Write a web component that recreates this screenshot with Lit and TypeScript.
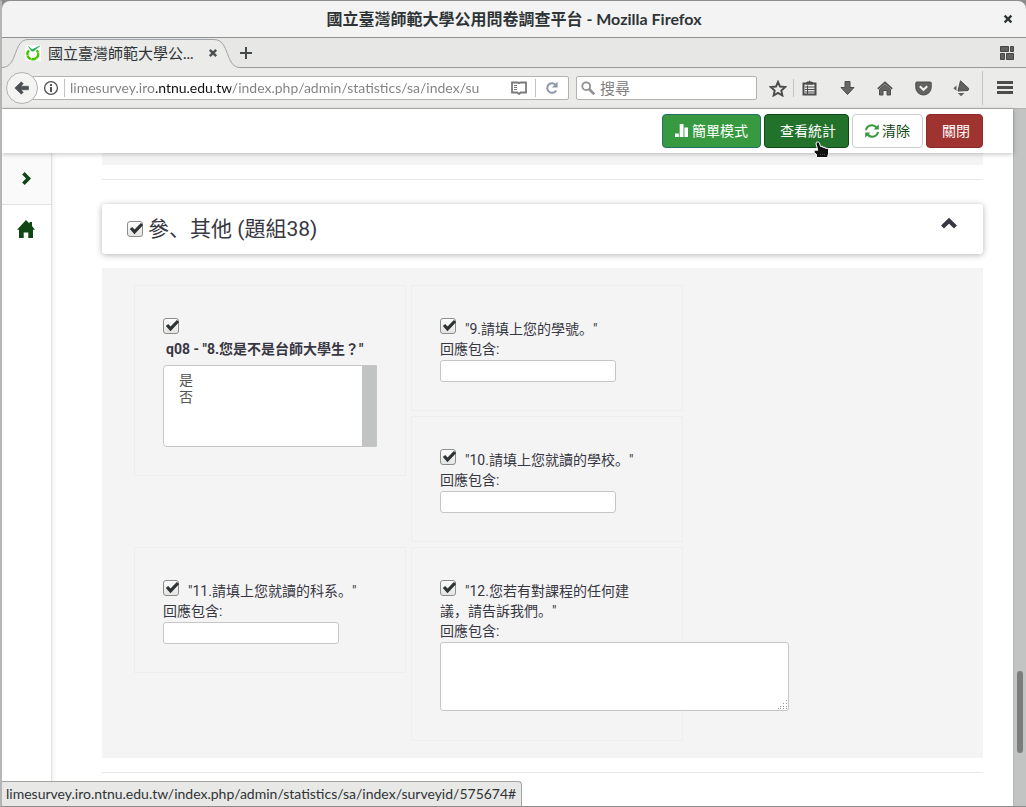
import { LitElement, html, css, svg, TemplateResult } from "lit";
import { customElement, property } from "lit/decorators.js";

const UI = css`Lato, "Noto Sans CJK SC", sans-serif`;
const WEB = css`Roboto, "Noto Sans CJK SC", sans-serif`;

const icon = (w: number, h: number, body: TemplateResult) =>
  html`<svg width=${w} height=${h} viewBox="0 0 ${w} ${h}" aria-hidden="true">${body}</svg>`;

const icons = {
  close: icon(10, 10, svg`<path d="M1.6 1.6l6.8 6.8M8.4 1.6L1.6 8.4" stroke="#2e3436" stroke-width="2.2" fill="none"/>`),
  tabClose: icon(10, 10, svg`<path d="M1.8 1.8l6.4 6.4M8.2 1.8L1.8 8.2" stroke="#4c4f50" stroke-width="2.4" fill="none"/>`),
  plus: icon(12, 12, svg`<path d="M6 0v12M0 6h12" stroke="#45484a" stroke-width="2" fill="none"/>`),
  favicon: icon(16, 16, svg`<rect width="16" height="16" fill="#fff"/><path d="M4 5.400A5.400 5.200 0 1 0 11.600 5.400" stroke="#46c300" stroke-width="2.400" stroke-dasharray="5 .4" fill="none"/><path d="M3.500 1.500l3.600 3.200 7.600-3.700-6.200 5-1.900.1z" fill="#12a84a" stroke="#12a84a" stroke-width=".6"/>`),
  groups: icon(14, 14, svg`<g fill="#616161" stroke="#474747"><path d="M.5.5h8v5h-8zM10.500.5h3v5h-3zM.5 7.500h4v6h-4zM6.500 7.500h7v6h-7z"/></g>`),
  back: icon(16, 14, svg`<path d="M.8 7L7.300.8 9.300 2.800 6.900 5.200H14.500V8.800H6.900L9.300 11.200 7.300 13.200z" fill="#4d5052" stroke="#3f4244" stroke-width=".5"/>`),
  info: icon(16, 16, svg`<circle cx="8" cy="8" r="6.400" fill="none" stroke="#505050" stroke-width="1.300"/><path d="M7 7h2v5H7zM7 4h2v2H7z" fill="#505050"/>`),
  reader: icon(16, 14, svg`<path d="M1 1.500H6.500Q8 1.500 8 3Q8 1.500 9.500 1.500H15V11.500H9.800L8 13 6.200 11.500H1z" fill="none" stroke="#7a7a7a" stroke-width="1.800"/><path d="M3 4.500h3M3 6.500h3M3 8.500h3" stroke="#7a7a7a"/>`),
  reload: icon(14, 14, svg`<path d="M11.200 9.400A4.800 4.800 0 1 1 10.400 3.600" fill="none" stroke="#8b98a8" stroke-width="2"/><path d="M12.600.8V6.600H6.800z" fill="#8b98a8"/>`),
  search: icon(14, 14, svg`<circle cx="5.200" cy="5.200" r="3.900" fill="none" stroke="#8f8f8f" stroke-width="1.800"/><path d="M8 8l5.200 5.200" stroke="#8f8f8f" stroke-width="2.600"/>`),
  star: icon(18, 17, svg`<path d="M9 1.800l2 4.700 5.200.5-3.900 3.500 1.100 5-4.400-2.600-4.400 2.600 1.100-5L1.800 7 7 6.500z" fill="none" stroke="#4c4c4c" stroke-width="1.900"/>`),
  clipboard: icon(15, 16, svg`<path d="M1.500 3.500h12v11h-12z" fill="#e8e8e8" stroke="#4c4c4c" stroke-width="2"/><path d="M4 4L5 2H6.500Q7.500.2 8.500 2H10L11 4z" fill="#4c4c4c" stroke="#4c4c4c"/><path d="M3 7h10M3 9.500h10M3 12h10M5.500 5.500v8.500" stroke="#4c4c4c"/>`),
  download: icon(15, 16, svg`<path d="M5 1.500h5v6h4L7.500 14.500 1 7.500h4z" fill="#666" stroke="#4c4c4c"/>`),
  home: icon(16, 15, svg`<path d="M.8 7.800L8 1.300l7.200 6.500" fill="none" stroke="#4c4c4c" stroke-width="1.700"/><path d="M2.500 8.500L8 3.600l5.500 4.900v5.500H10V9.500H6V14H2.500z" fill="#666" stroke="#4c4c4c"/>`),
  pocket: icon(17, 15, svg`<path d="M1.500 1h14l.7.700V6.500A7.700 7.500 0 0 1 .8 6.500V1.700z" fill="#616161" stroke="#4c4c4c"/><path d="M4.800 5.200l3.700 3.500 3.700-3.500" fill="none" stroke="#eee" stroke-width="2.200"/>`),
  addon: icon(17, 17, svg`<path d="M7.500.8L15.800 8.500 15 10.500 5 11z" fill="#616161" stroke="#4c4c4c"/><path d="M.3 8.200l3.200-2.700v5.200zM4.800 13h6.600l-3.300 3.200z" fill="#616161"/>`),
  menu: icon(16, 14, svg`<path d="M0 1.500h16M0 6.500h16M0 11.500h16" stroke="#4c4c4c" stroke-width="3"/>`),
  bars: icon(14, 14, svg`<path d="M0 9.500h3.800v3.500H0zM4.700 0h3.800v13H4.700zM9.400 3.500h3.600v9.500H9.400z" fill="#fff"/>`),
  refresh: icon(14, 14, svg`<g fill="none" stroke="#379a3f" stroke-width="2"><path d="M1 6.200A5.900 5.600 0 0 1 11.500 3.500M13 7.800A5.900 5.600 0 0 1 2.500 10.500"/></g><path d="M13.800.3V5.400H8.700zM.2 13.700V8.600H5.300z" fill="#379a3f"/>`),
  chevronRight: icon(9, 13, svg`<path d="M1.400 1.300L6.500 6.500 1.400 11.700" fill="none" stroke="#114514" stroke-width="3.600"/>`),
  house: icon(18, 18, svg`<path d="M9 0l3.500 3.500V2H15v4l3 3.800h-2V18h-4.700v-5.500H6.700V18H2V9.800H0z" fill="#114514"/>`),
  chevronUp: icon(16, 11, svg`<path d="M1.500 9L8 2.700 14.500 9" fill="none" stroke="#373743" stroke-width="4.200"/>`),
  check: icon(16, 16, svg`<path d="M4 7l3.500 3.800L15 3" fill="none" stroke="#2e3436" stroke-width="3.200"/>`),
  grip: icon(10, 10, svg`<path d="M8 0h1v1h-1zM5 3h1v1h-1zM8 3h1v1h-1zM2 6h1v1h-1zM5 6h1v1h-1zM8 6h1v1h-1zM0 8h1v1h-1zM2 8h1v1h-1zM5 8h1v1h-1zM8 8h1v1h-1z" fill="#999"/>`),
  hand: icon(18, 18, svg`<path d="M3.500 1.200Q5.200.3 6.400 1.800L7.500 5.400H9.600V6.300H12V7.200H14.500L15.500 8.500V12.500L14.500 16.500H3.500V13.500L1.200 11.500V9.200H4.800L3 3z" fill="#111" stroke="#fff"/><path d="M7 13.500h6" stroke="#555" stroke-dasharray="1 1"/>`),
};

@customElement("check-box")
class CheckBox extends LitElement {
  @property() label = "";
  static styles = css`
    :host { display: inline-grid; width: 16px; height: 16px; }
    input, svg { grid-area: 1 / 1; }
    input {
      appearance: none; margin: 0; width: 16px; height: 16px; box-sizing: border-box;
      border: 1px solid #8b8e88; border-radius: 3px;
      background: linear-gradient(#fdfdfd, #e4e4e2);
    }
    svg { pointer-events: none; display: none; }
    input:checked + svg { display: block; }
  `;
  render() {
    return html`<input type="checkbox" checked aria-label=${this.label} />${icons.check}`;
  }
}

@customElement("browser-chrome")
class BrowserChrome extends LitElement {
  static styles = css`
    :host { display: block; font: 15px/20px ${UI}; color: #2e3436; }
    svg { display: block; }
    button { border: 0; padding: 0; margin: 0; background: none; font: inherit; color: inherit; display: grid; place-items: center; }
    .title { display: grid; grid-template-columns: 1fr auto 1fr; align-items: center; height: 37px; box-sizing: border-box; background: #f3f3f3; border-bottom: 1px solid #8f918f; border-radius: 8px 8px 0 0; }
    .title h1 { grid-column: 2; margin: 0; font-size: 16px; line-height: 20px; font-weight: 700; }
    .title button { justify-self: end; width: 36px; height: 36px; }
    .tabs { display: flex; height: 30px; background: #e7e7e5; box-shadow: inset 0 -1px #9a9c9a; align-items: center; }
    .tab { display: grid; width: 238px; height: 30px; }
    .tab > * { grid-area: 1 / 1; }
    .label { display: flex; align-items: center; padding: 0 24px 0 23px; gap: 7px; }
    .label span { flex: 1; white-space: nowrap; overflow: hidden; }
    .groups { margin-left: auto; margin-right: 12px; }
    .nav { display: flex; align-items: center; height: 41px; box-sizing: border-box; background: #ebebe9; border-bottom: 1px solid #b2b3b0; padding-left: 4px; }
    .back { width: 32px; height: 32px; box-sizing: border-box; border: 1px solid #b2b3b0; border-radius: 50%; background: #f4f4f3; z-index: 1; flex: none; }
    .field { display: flex; align-items: center; height: 24px; box-sizing: border-box; background: #fff; border: 1px solid #b2b3b0; border-radius: 2px; min-width: 0; }
    .url { flex: 1; margin-left: -6px; padding: 0 9px 0 10px; }
    .field input { border: 0; outline: 0; padding: 0; min-width: 0; flex: 1; height: 20px; font: 14px/20px ${UI}; background: none; }
    .field .address {
      background: linear-gradient(90deg, #808080 86px, #111 86px 161px, #808080 161px);
      -webkit-background-clip: text; background-clip: text; color: transparent;
      margin: 0 21px 0 5px;
    }
    .rule { width: 1px; height: 18px; background: #c4c4c2; flex: none; }
    .info { margin-right: 5px; }
    .reader { margin-right: 8px; }
    .reload { margin-left: 9px; }
    .search { width: 181px; margin: 0 6px 0 7px; padding: 0 4px; gap: 5px; }
    .field.search input { font-size: 15px; }
    .search input::placeholder { color: #808080; opacity: 1; }
    .tool { width: 38px; height: 32px; flex: none; }
    .narrow { width: 30px; }
    .tool.menu { width: 42px; }
    .tall { height: 34px; margin: 0 1px 0 2px; }
    .set { margin-right: 4px; }
  `;
  render() {
    return html`
      <header class="title">
        <h1>國立臺灣師範大學公用問卷調查平台 - Mozilla Firefox</h1>
        <button aria-label="Close window">${icons.close}</button>
      </header>
      <div class="tabs">
        <div class="tab">
          <svg width="240" height="30" viewBox="0 0 240 30" aria-hidden="true">
            <path d="M0 30V29.500C16 29.500 11 1.500 26 1.500H212C228 1.500 223 29.500 238 29.500V30z" fill="#ebebe9" />
            <path d="M0 29.500C16 29.500 11 1.500 26 1.500H212C228 1.500 223 29.500 238 29.500" fill="none" stroke="#9ea3ab" />
          </svg>
          <div class="label">${icons.favicon}<span>國立臺灣師範大學公...</span><button aria-label="Close tab">${icons.tabClose}</button></div>
        </div>
        <button aria-label="New tab">${icons.plus}</button>
        <button class="groups" aria-label="Tab groups">${icons.groups}</button>
      </div>
      <nav class="nav">
        <button class="back" aria-label="Back">${icons.back}</button>
        <div class="field url">
          <button class="info" aria-label="Site information">${icons.info}</button>
          <span class="rule"></span>
          <input class="address" aria-label="Address" value="limesurvey.iro.ntnu.edu.tw/index.php/admin/statistics/sa/index/su" />
          <button class="reader" aria-label="Reader view">${icons.reader}</button>
          <span class="rule"></span>
          <button class="reload" aria-label="Reload">${icons.reload}</button>
        </div>
        <div class="field search">${icons.search}<input type="search" aria-label="搜尋" placeholder="搜尋" /></div>
        <button class="tool narrow" aria-label="Bookmark">${icons.star}</button>
        <span class="rule"></span>
        <button class="tool narrow set" aria-label="Bookmarks list">${icons.clipboard}</button>
        <button class="tool" aria-label="Downloads">${icons.download}</button>
        <button class="tool" aria-label="Home">${icons.home}</button>
        <button class="tool" aria-label="Pocket">${icons.pocket}</button>
        <button class="tool" aria-label="Add-on">${icons.addon}</button>
        <span class="rule tall"></span>
        <button class="tool menu" aria-label="Menu">${icons.menu}</button>
      </nav>
    `;
  }
}

interface Question { id: string; text: string; long?: boolean; }

const questions: Question[] = [
  { id: "q09", text: '"9.請填上您的學號。"' },
  { id: "q10", text: '"10.請填上您就讀的學校。"' },
  { id: "q11", text: '"11.請填上您就讀的科系。"' },
  { id: "q12", text: '"12.您若有對課程的任何建議，請告訴我們。"', long: true },
];

@customElement("app-root")
class AppRoot extends LitElement {
  static styles = css`
    :host {
      display: flex; flex-direction: column; height: 100vh; box-sizing: border-box; overflow: hidden; position: relative;
      border: solid #8c8c8c; border-width: 1px 0 1px 2px; border-left-color: #b4b5b4; background: #8c8c8c;
      font: 14px/20px ${WEB}; color: #373743;
    }
    svg { display: block; }
    .view { flex: 1; min-height: 0; display: flex; background: #fff; }
    .page { flex: 1; min-width: 0; display: flex; flex-direction: column; }
    .scroll { width: 13px; box-sizing: border-box; border-left: 1px solid #b4b6b5; background: #c2c4c3; display: flex; flex-direction: column; align-items: center; }
    .scroll::before { content: ""; flex: 562; }
    .scroll::after { content: ""; flex: 53; }
    .thumb { flex: 82; width: 6px; border-radius: 3px; background: #7c7c7c; }
    .actions { display: flex; justify-content: flex-end; align-items: center; gap: 3px; height: 44px; box-sizing: border-box; padding-right: 30px; background: #fff; box-shadow: 0 1px 5px rgba(0, 0, 0, 0.25); z-index: 2; }
    .btn { display: flex; align-items: center; gap: 3px; height: 34px; box-sizing: border-box; padding: 0 12px; margin: 0; font: 14px/20px ${WEB}; color: #fff; border: 1px solid; border-radius: 4px; position: relative; white-space: nowrap; }
    .simple { background: #389a40; border-color: #246f66; }
    .stats { background: #22722b; border-color: #0f4716; }
    .clear { background: #fff; border-color: #ccc; color: #114514; }
    .exit { background: #9f3330; border-color: #8c2c2a; }
    .hand { position: absolute; left: 48px; top: 26px; }
    .body { flex: 1; min-height: 0; display: flex; }
    .side { width: 50px; box-sizing: border-box; border-right: 1px solid #e0e0e0; box-shadow: 1px 0 5px rgba(0, 0, 0, 0.08); }
    .side button { display: grid; place-items: center; width: 48px; height: 48px; padding: 0; border: 0; background: none; }
    .side .toggle { width: 100%; height: 52px; background: #fafafa; border-bottom: 1px solid #e0e0e0; }
    main { flex: 1; min-width: 0; padding: 0 30px 0 50px; overflow: hidden; }
    .previous { height: 12px; background: #f4f4f4; }
    hr { border: 0; height: 1px; background: #e8e8e8; margin: 14px 0 24px; }
    .head { display: flex; align-items: center; height: 50px; padding: 0 26px 0 25px; border-radius: 3px; background: #fff; box-shadow: 0 1px 6px rgba(0, 0, 0, 0.3); }
    .head h2 { flex: 1; margin: 0 0 0 5px; font-size: 21px; line-height: 24px; font-weight: 400; }
    .head button { border: 0; padding: 0 0 12px; background: none; }
    .panel { display: grid; grid-template-columns: repeat(2, minmax(0, 272px)); gap: 5px; align-items: start; margin-top: 14px; padding: 17px 32px; background: #f4f4f4; }
    .cell { border: 1px solid #eee; padding: 33px 28px 28px; }
    .tall { grid-row: span 2; }
    .cell check-box { vertical-align: top; margin: -1px 9px -1px 0; }
    .question { display: block; }
    .bold { font-family: Roboto, "Noto Sans CJK TC", sans-serif; font-weight: 700; padding-left: 3px; white-space: nowrap; }
    .reply { display: block; }
    input, textarea { display: block; box-sizing: border-box; margin: 1px 0 0; border: 1px solid #c6c6c6; border-radius: 3px; background: #fff; font: inherit; }
    input { width: 176px; height: 22px; }
    .long { display: grid; width: 349px; margin-bottom: 1px; }
    .long > * { grid-area: 1 / 1; }
    textarea { width: 100%; height: 69px; resize: none; }
    .long svg { place-self: end; margin: 0 1px 1px 0; }
    .list { display: flex; margin-top: 6px; height: 82px; box-sizing: border-box; border: 1px solid #c6c6c6; border-radius: 4px 0 0 4px; background: #fff; overflow: hidden; }
    select { flex: 1; min-width: 0; border: 0; outline: 0; padding: 3px 15px; background: none; font: 14px/17px ${WEB}; color: #555; overflow: hidden; }
    option { padding: 0; height: 17px; min-height: 17px; }
    .track { width: 14px; background: #c2c4c3; }
    .status { position: absolute; left: 0; bottom: 0; z-index: 3; height: 25px; box-sizing: border-box; padding: 1px 5px 0 4px; border: solid #a2a3a1; border-width: 1px 1px 0 0; border-radius: 0 4px 0 0; background: #e8e8e6; color: #2e3436; font: 14px/22px ${UI}; }
  `;

  private cell(q: Question) {
    return html`<div class="cell">
      <div class="question"><check-box label=${q.text}></check-box>${q.text}</div>
      <label class="reply" for=${q.id}>回應包含:</label>
      ${q.long ? html`<div class="long"><textarea id=${q.id}></textarea>${icons.grip}</div>` : html`<input id=${q.id} type="text" />`}
    </div>`;
  }

  render() {
    return html`
      <browser-chrome></browser-chrome>
      <div class="view">
        <div class="page">
          <div class="actions">
            <button class="btn simple">${icons.bars}<span>簡單模式</span></button>
            <button class="btn stats"><i></i><span>查看統計</span><span class="hand">${icons.hand}</span></button>
            <button class="btn clear">${icons.refresh}<span>清除</span></button>
            <button class="btn exit"><i></i><span>關閉</span></button>
          </div>
          <div class="body">
            <nav class="side">
              <button class="toggle" aria-label="Expand">${icons.chevronRight}</button>
              <button aria-label="Home">${icons.house}</button>
            </nav>
            <main>
              <div class="previous"></div>
              <hr />
              <div class="head">
                <check-box label="參、其他 (題組38)"></check-box>
                <h2>參、其他 (題組38)</h2>
                <button aria-label="Collapse">${icons.chevronUp}</button>
              </div>
              <section class="panel">
                <div class="cell tall">
                  <check-box label="q08"></check-box>
                  <label class="question bold" for="q08">q08 - "8.您是不是台師大學生？"</label>
                  <div class="list">
                    <select id="q08" multiple><option>是</option><option>否</option></select>
                    <div class="track"></div>
                  </div>
                </div>
                ${questions.map((q) => this.cell(q))}
              </section>
              <hr />
            </main>
          </div>
        </div>
        <div class="scroll"><div class="thumb"></div></div>
      </div>
      <div class="status">limesurvey.iro.ntnu.edu.tw/index.php/admin/statistics/sa/index/surveyid/575674#</div>
    `;
  }
}
